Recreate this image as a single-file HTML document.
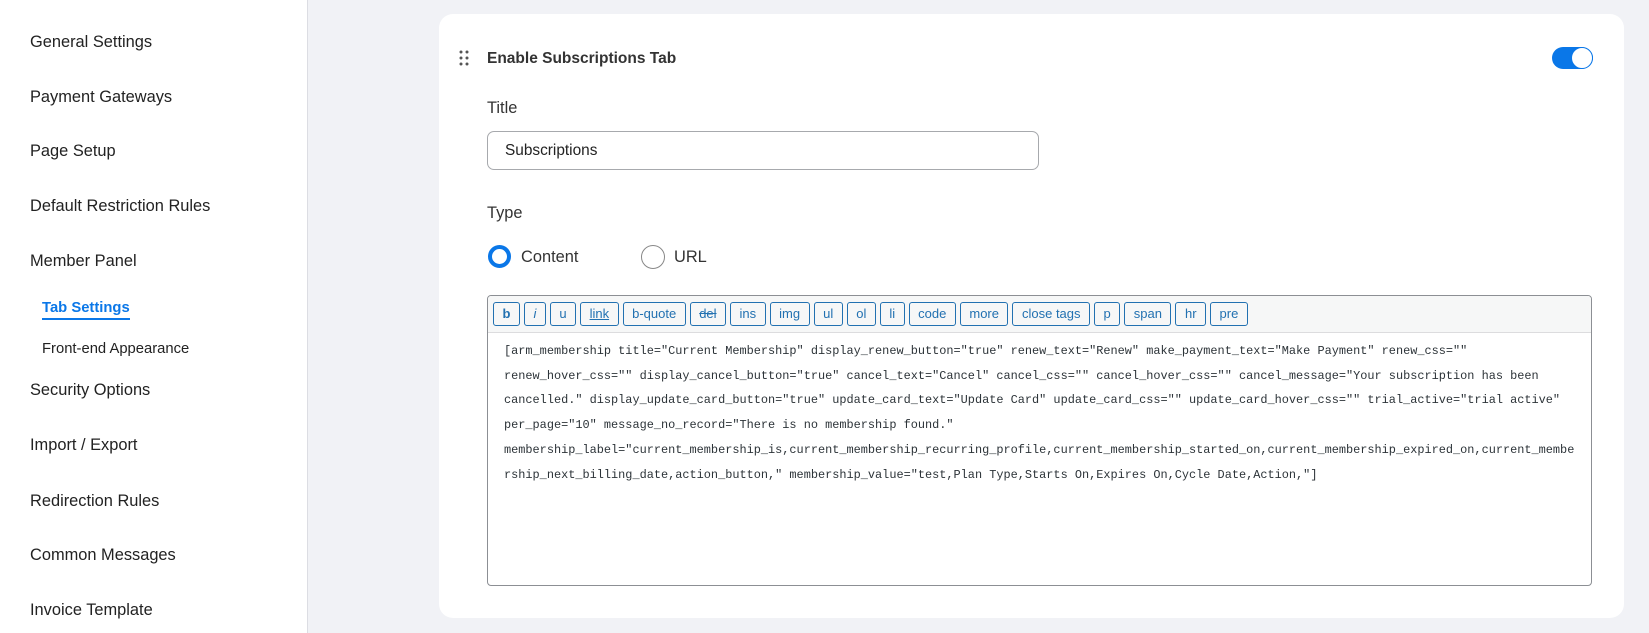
<!DOCTYPE html>
<html><head><meta charset="utf-8"><style>
*{box-sizing:border-box;margin:0;padding:0}
body{width:1649px;height:633px;background:#f1f2f6;font-family:"Liberation Sans",sans-serif;color:#1f2329;position:relative;overflow:hidden}
.side{position:absolute;left:0;top:0;width:308px;height:633px;background:#fff;border-right:1px solid #dcdde3}
.si{position:absolute;left:30px;font-size:16.4px;line-height:20px;transform:translateY(-9px);color:#222}
.sub{position:absolute;left:42px;font-size:14.8px;line-height:18px;transform:translateY(-8px);color:#222}
.card{position:absolute;left:439px;top:14px;width:1185px;height:604px;background:#fff;border-radius:14px}
.abs{position:absolute}
.tb{position:absolute;left:487px;top:295px;width:1105px;height:291px;border:1px solid #8c8f94;border-radius:4px;overflow:hidden}
.bar{height:37px;background:#f6f7f7;border-bottom:1px solid #dcdcde;display:flex;gap:4px;padding:6px 0 0 5px}
.bar span{height:24px;border:1px solid #2271b1;border-radius:3px;color:#2271b1;font-size:13px;line-height:22px;padding:0 8.5px;background:#f6f7f7}
.code{font-family:"Liberation Mono",monospace;font-size:11.9px;line-height:24.7px;color:#2c3338;padding:6px 0 0 16px;white-space:pre}
</style></head><body>
<div class="side">
<div class="si" style="top:41px">General Settings</div>
<div class="si" style="top:96px">Payment Gateways</div>
<div class="si" style="top:150px">Page Setup</div>
<div class="si" style="top:205px">Default Restriction Rules</div>
<div class="si" style="top:260px">Member Panel</div>
<div class="sub" style="top:307px;color:#0a77e8;font-weight:bold;border-bottom:2px solid #0a77e8;padding-bottom:1px">Tab Settings</div>
<div class="sub" style="top:348px">Front-end Appearance</div>
<div class="si" style="top:389px">Security Options</div>
<div class="si" style="top:444px">Import / Export</div>
<div class="si" style="top:500px">Redirection Rules</div>
<div class="si" style="top:554px">Common Messages</div>
<div class="si" style="top:609px">Invoice Template</div>
</div>
<div class="card"></div>
<svg class="abs" style="left:459px;top:50px" width="10" height="16"><g fill="#555"><circle cx="2" cy="2" r="1.5"/><circle cx="8" cy="2" r="1.5"/><circle cx="2" cy="8" r="1.5"/><circle cx="8" cy="8" r="1.5"/><circle cx="2" cy="14" r="1.5"/><circle cx="8" cy="14" r="1.5"/></g></svg>
<div class="abs" style="left:487px;top:50px;font-size:15.5px;font-weight:bold;color:#333">Enable Subscriptions Tab</div>
<div class="abs" style="left:1552px;top:47px;width:41px;height:22px;border-radius:11px;background:#0a77e8"></div>
<div class="abs" style="left:1571px;top:47px;width:22px;height:22px;border-radius:50%;background:#fff;border:1px solid #0a77e8"></div>
<div class="abs" style="left:487px;top:99px;font-size:16.4px;color:#333">Title</div>
<div class="abs" style="left:487px;top:131px;width:552px;height:39px;border:1px solid #a7a9ad;border-radius:7px;font-size:15.4px;line-height:37px;padding-left:17px;color:#222">Subscriptions</div>
<div class="abs" style="left:487px;top:204px;font-size:16.4px;color:#333">Type</div>
<div class="abs" style="left:488px;top:245px;width:23px;height:23px;border-radius:50%;border:4px solid #0a77e8"></div>
<div class="abs" style="left:521px;top:248px;font-size:16.4px;color:#333">Content</div>
<div class="abs" style="left:641px;top:245px;width:24px;height:24px;border-radius:50%;border:1px solid #888"></div>
<div class="abs" style="left:674px;top:248px;font-size:16.4px;color:#333">URL</div>
<div class="tb">
<div class="bar"><span style="font-weight:bold">b</span><span style="font-style:italic">i</span><span>u</span><span style="text-decoration:underline">link</span><span>b-quote</span><span style="text-decoration:line-through">del</span><span>ins</span><span>img</span><span>ul</span><span>ol</span><span>li</span><span>code</span><span>more</span><span>close tags</span><span>p</span><span>span</span><span>hr</span><span>pre</span></div>
<div class="code">[arm_membership title="Current Membership" display_renew_button="true" renew_text="Renew" make_payment_text="Make Payment" renew_css=""
renew_hover_css="" display_cancel_button="true" cancel_text="Cancel" cancel_css="" cancel_hover_css="" cancel_message="Your subscription has been
cancelled." display_update_card_button="true" update_card_text="Update Card" update_card_css="" update_card_hover_css="" trial_active="trial active"
per_page="10" message_no_record="There is no membership found."
membership_label="current_membership_is,current_membership_recurring_profile,current_membership_started_on,current_membership_expired_on,current_membe
rship_next_billing_date,action_button," membership_value="test,Plan Type,Starts On,Expires On,Cycle Date,Action,"]</div>
</div>
</body></html>
